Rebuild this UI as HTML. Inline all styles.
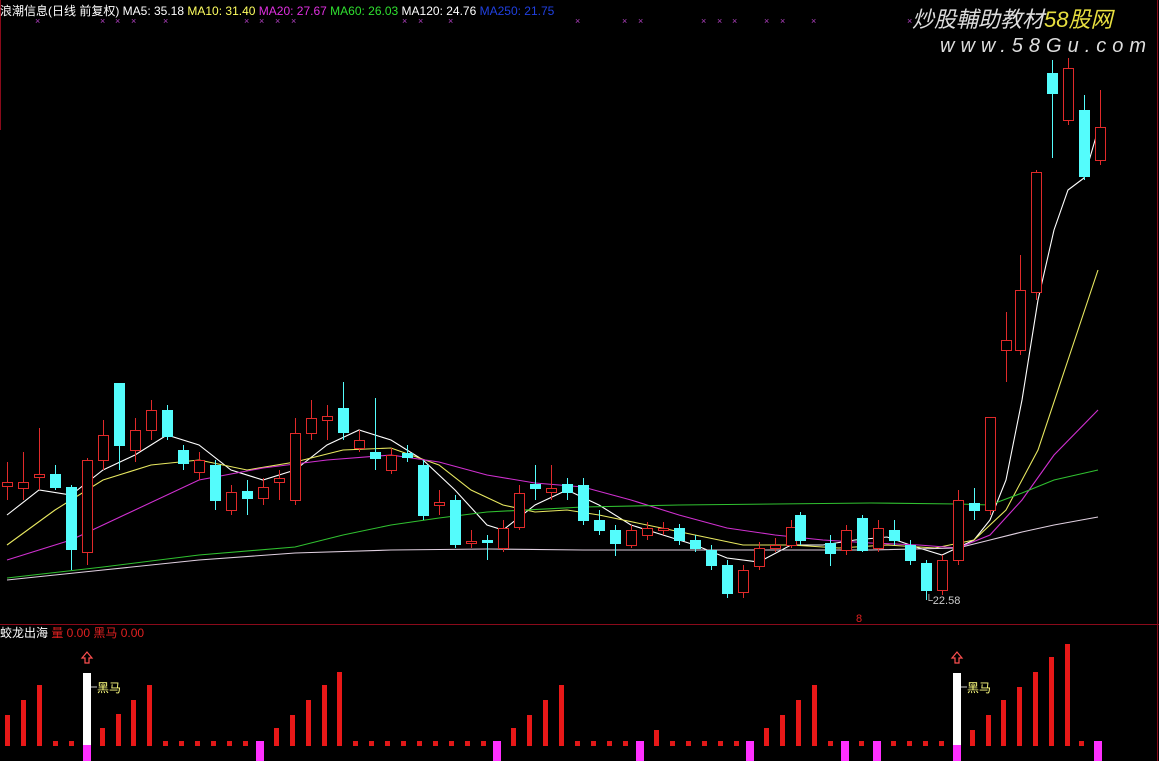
<!DOCTYPE html>
<html><head><meta charset="utf-8"><style>
html,body{margin:0;padding:0;background:#000;width:1159px;height:761px;overflow:hidden}
svg{display:block}
text{font-family:"Liberation Sans","Noto Sans CJK SC",sans-serif}
</style></head><body>
<svg id="s" width="1159" height="761" viewBox="0 0 1159 761" xmlns="http://www.w3.org/2000/svg">
<rect width="1159" height="761" fill="#000"/>
<line x1="0" y1="624.5" x2="1159" y2="624.5" stroke="#8a0a1a" stroke-width="1"/>
<line x1="1157.5" y1="0" x2="1157.5" y2="761" stroke="#8a0a1a" stroke-width="1"/>
<line x1="0.5" y1="0" x2="0.5" y2="130" stroke="#8a0a1a" stroke-width="1"/>
<text x="0" y="15" font-size="12" fill="#fff">浪潮信息(日线 前复权) MA5: 35.18 <tspan fill="#ffff60">MA10: 31.40</tspan> <tspan fill="#e030e0">MA20: 27.67</tspan> <tspan fill="#30e030">MA60: 26.03</tspan> <tspan fill="#fff">MA120: 24.76</tspan> <tspan fill="#2040e0">MA250: 21.75</tspan></text>
<text x="912" y="27" font-size="22" font-style="italic" fill="#ddd" font-family="Liberation Sans,Noto Sans CJK SC,sans-serif">炒股輔助教材<tspan fill="#e8e040">58股网</tspan></text>
<text x="940" y="52" font-size="20" font-style="italic" fill="#ddd" letter-spacing="6">www.58Gu.com</text>
<g id="ma" fill="none" stroke-width="1.1"></g>
<g id="c"></g>
<text x="925" y="604" font-size="11" fill="#ccc">└22.58</text>
<text x="856" y="622" font-size="11" fill="#e02020">8</text>
<text x="0" y="637" font-size="12" fill="#fff">蛟龙出海 <tspan fill="#e02020">量 0.00 黑马 0.00</tspan></text>
<g id="b"></g>
</svg>
<script>
var NS="http://www.w3.org/2000/svg";
function el(p,t,a){var e=document.createElementNS(NS,t);for(var k in a)e.setAttribute(k,a[k]);p.appendChild(e);return e;}
var s=document.getElementById('s');
// x marks
[38,103,118,134,166,247,262,278,294,405,421,451,578,625,641,704,720,735,767,783,814,910].forEach(function(x){
 var t=el(s,'text',{x:x-3,y:24,'font-size':9,fill:'#b040c0'});t.textContent='×';});
var ma=document.getElementById('ma');
function pl(c,pts){el(ma,'polyline',{points:pts,stroke:c});}
pl('#ffffff','7,515 39,490 71,495 103,470 135,455 167,435 199,445 231,470 263,480 295,470 327,445 359,430 391,440 423,460 455,490 487,525 503,530 535,505 567,490 599,505 631,525 663,535 695,545 727,558 759,562 791,545 823,545 855,540 887,537 919,548 942,555 974,540 990,520 1006,480 1022,400 1038,300 1054,230 1068,190 1084,178 1098,130');
pl('#e8e860','7,545 55,510 103,480 151,465 199,460 247,470 295,462 343,450 391,448 439,465 471,490 503,505 535,512 567,510 599,515 647,525 695,535 743,545 791,545 839,548 887,545 935,548 974,540 1006,510 1038,450 1068,360 1098,270');
pl('#d030d0','7,560 71,540 135,510 199,480 263,468 327,460 391,455 439,462 487,475 535,483 583,487 631,500 679,515 727,528 775,535 823,540 871,543 919,545 958,548 990,535 1022,500 1054,455 1098,410');
pl('#30c030','7,578 103,567 199,555 295,547 343,535 391,525 439,518 487,512 583,507 679,505 775,504 871,503 958,504 990,505 1022,493 1054,480 1098,470');
pl('#e0d0e0','7,580 103,570 199,560 295,553 391,550 487,549 583,550 679,550 775,550 871,550 958,548 990,540 1022,532 1054,525 1098,517');
var c=document.getElementById('c');
// x, top, bottom, wickTop, wickBot, up?
var C=[[7,482,486,462,500,1],[23,482,488,452,500,1],[39,474,477,428,490,1],[55,474,487,465,490,0],[71,487,549,485,570,0],[87,460,552,458,565,1],[103,435,460,420,470,1],[119,383,445,383,470,0],[135,430,450,418,462,1],[151,410,430,400,440,1],[167,410,436,405,440,0],[183,450,463,445,470,0],[199,460,472,452,480,1],[215,465,500,460,510,0],[231,492,510,485,515,1],[247,491,498,480,515,0],[263,487,498,478,505,1],[279,478,482,470,500,1],[295,433,500,418,505,1],[311,418,433,400,440,1],[327,416,420,405,440,1],[343,408,432,382,440,0],[359,440,448,430,452,1],[375,452,458,398,470,0],[391,455,470,448,474,1],[407,453,457,445,462,0],[423,465,515,460,520,0],[439,502,505,490,515,1],[455,500,544,495,548,0],[471,541,543,530,548,1],[487,540,542,535,560,0],[503,528,548,520,552,1],[519,493,527,485,530,1],[535,484,488,465,500,0],[551,488,492,465,500,1],[567,484,492,478,500,0],[583,485,520,478,525,0],[599,520,530,510,535,0],[615,530,543,525,556,0],[631,530,545,525,548,1],[647,528,535,522,540,1],[663,528,530,522,535,1],[679,528,540,524,545,0],[695,540,548,535,552,0],[711,550,565,545,570,0],[727,565,593,560,598,0],[743,570,592,565,598,1],[759,548,566,542,570,1],[775,545,548,538,552,1],[791,527,545,520,548,1],[800,515,540,512,545,0],[830,543,553,535,566,0],[846,530,550,525,555,1],[862,518,550,515,552,0],[878,528,548,520,552,1],[894,530,540,520,545,0],[910,545,560,540,565,0],[926,563,590,560,600,0],[942,560,590,555,595,1],[958,500,560,490,565,1],[974,503,510,488,520,0],[990,417,510,417,515,1],[1006,340,350,312,382,1],[1020,290,350,255,355,1],[1036,172,292,170,300,1],[1052,73,93,60,158,0],[1068,68,120,58,125,1],[1084,110,176,95,180,0],[1100,127,160,90,165,1]];
C.forEach(function(d){var col=d[5]?'#e02a2a':'#54fcfc';
 el(c,'line',{x1:d[0]+.5,y1:d[3],x2:d[0]+.5,y2:d[4],stroke:col});
 var h=Math.max(d[2]-d[1],1);
 if(d[5]) el(c,'rect',{x:d[0]-4.5,y:d[1]+.5,width:10,height:h,fill:'#000',stroke:col});
 else el(c,'rect',{x:d[0]-5,y:d[1],width:11,height:h+1,fill:col});
});
var b=document.getElementById('b');
// bottom bars: [x, top] ; top=0 dot; 'm' magenta; 'w' white
var B=[[7,715],[23,700],[39,685],[55,0],[71,0],[87,'w'],[102,728],[118,714],[133,700],[149,685],[165,0],[181,0],[197,0],[213,0],[229,0],[245,0],[260,'m'],[276,728],[292,715],[308,700],[324,685],[339,672],[355,0],[371,0],[387,0],[403,0],[419,0],[435,0],[451,0],[467,0],[483,0],[497,'m'],[513,728],[529,715],[545,700],[561,685],[577,0],[593,0],[609,0],[625,0],[640,'m'],[656,730],[672,0],[688,0],[704,0],[720,0],[736,0],[750,'m'],[766,728],[782,715],[798,700],[814,685],[830,0],[845,'m'],[861,0],[877,'m'],[893,0],[909,0],[925,0],[941,0],[957,'w'],[972,730],[988,715],[1003,700],[1019,687],[1035,672],[1051,657],[1067,644],[1081,0],[1098,'m']];
B.forEach(function(d){var x=d[0],t=d[1];
 if(t==='m'){el(b,'rect',{x:x-4,y:741,width:8,height:20,fill:'#ff30ff'});}
 else if(t==='w'){el(b,'rect',{x:x-4,y:673,width:8,height:72,fill:'#fff'});el(b,'rect',{x:x-4,y:745,width:8,height:16,fill:'#ff30ff'});
  el(b,'path',{d:'M'+(x-5)+' 658 L'+x+' 652 L'+(x+5)+' 658 L'+(x+2)+' 658 L'+(x+2)+' 663 L'+(x-2)+' 663 L'+(x-2)+' 658 Z',fill:'#000',stroke:'#ff5050','stroke-width':1.2});
  el(b,'line',{x1:x+4,y1:687,x2:x+10,y2:687,stroke:'#ccc'});
  var tt=el(b,'text',{x:x+10,y:692,'font-size':12,fill:'#ffff80'});tt.textContent='黑马';}
 else if(t===0){el(b,'rect',{x:x-2,y:741,width:5,height:5,fill:'#e01818'});}
 else el(b,'rect',{x:x-2,y:t,width:5,height:746-t,fill:'#e81818'});
});
</script>
</body></html>
